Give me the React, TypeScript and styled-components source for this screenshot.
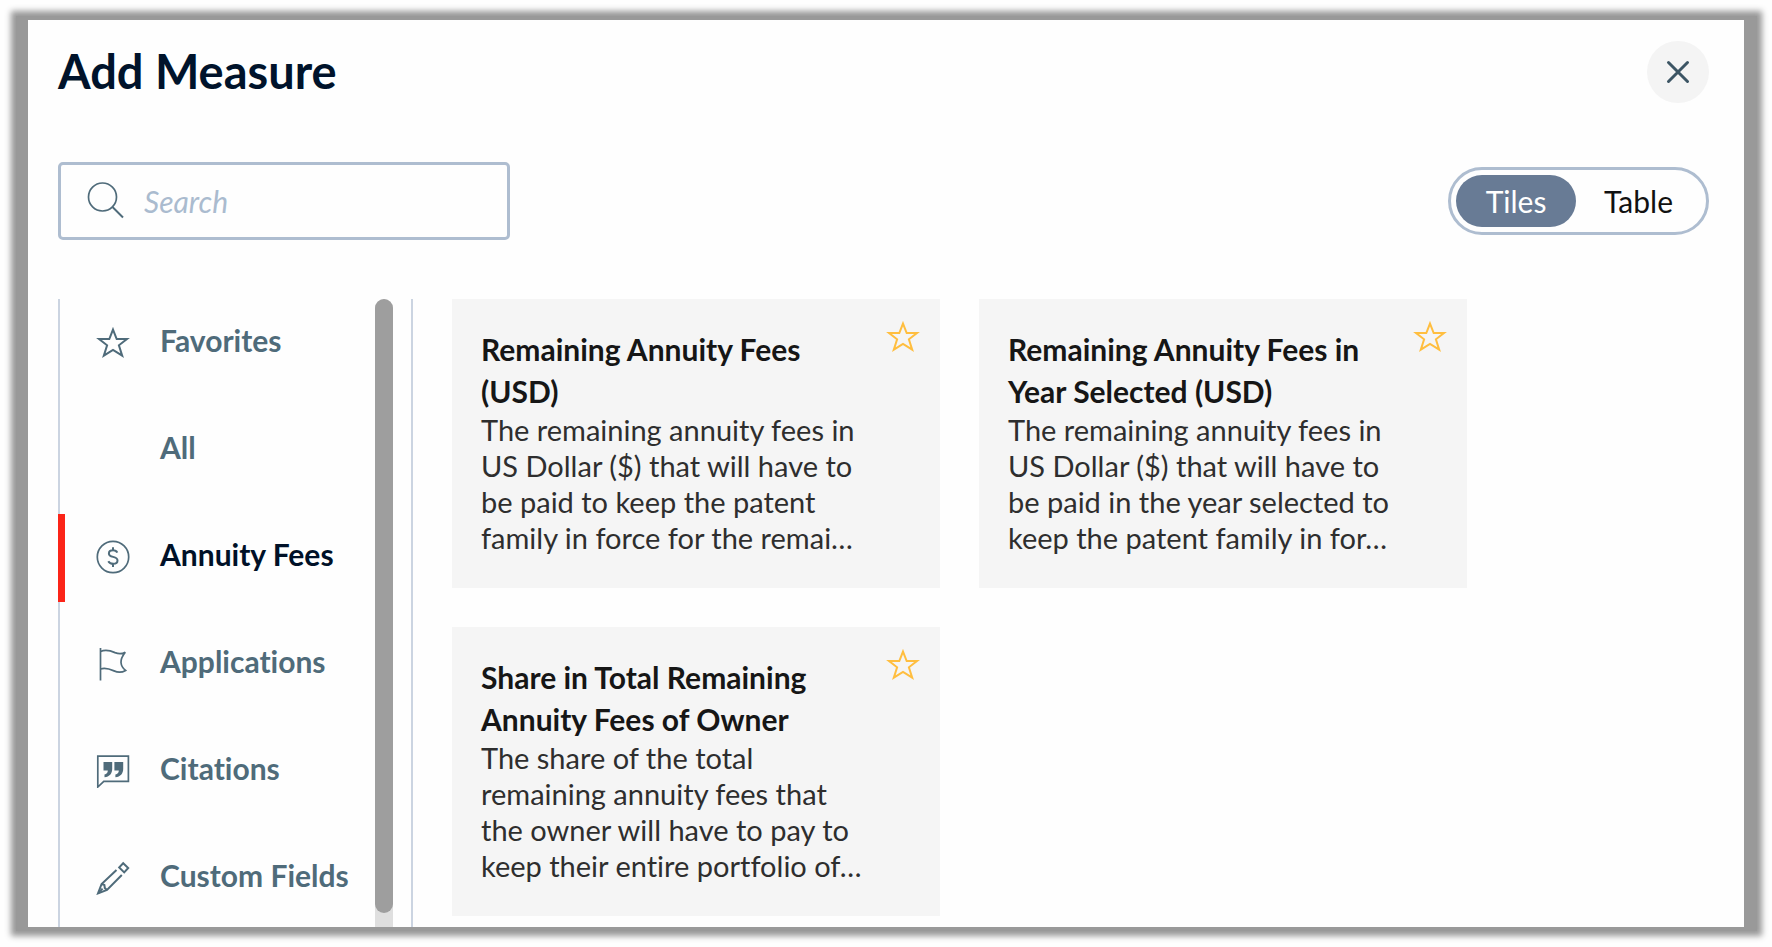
import React, { useState } from 'react';
import styled, { createGlobalStyle } from 'styled-components';

const GlobalStyle = createGlobalStyle`
  *, *::before, *::after { box-sizing: border-box; }
  body {
    margin: 0;
    background: #fefefe;
    font-family: Lato, "Liberation Sans", sans-serif;
    font-size: 29px;
    font-variant-ligatures: none;
    color: #222;
  }
  button, input { font: inherit; color: inherit; }
`;

const Page = styled.div`
  display: flex;
  min-height: 100vh;
  padding: 16px 15px 16px 16px;
`;

const Frame = styled.div`
  display: flex;
  flex: 1;
  padding: 4px 13px 4px 12px;
  background: #999;
  box-shadow: 0 0 6px 5px #999;
`;

const Dialog = styled.section`
  display: flex;
  flex-direction: column;
  flex: 1;
  min-width: 0;
  padding: 21px 35px 0 30px;
  background: #fefefe;
`;

const Header = styled.header`
  display: flex;
  justify-content: space-between;
  align-items: flex-start;
`;

const Title = styled.h1`
  margin: 0;
  font-size: 47px;
  line-height: 60px;
  font-weight: 700;
  color: #00132b;
`;

const CloseButton = styled.button`
  display: flex;
  align-items: center;
  justify-content: center;
  width: 62px;
  height: 62px;
  padding: 0;
  border: 0;
  border-radius: 50%;
  background: #f4f4f4;
  color: #3c5564;
  cursor: pointer;
`;

const Toolbar = styled.div`
  display: flex;
  justify-content: space-between;
  align-items: center;
  margin-top: 59px;
`;

const SearchBox = styled.label`
  display: flex;
  align-items: center;
  gap: 20px;
  width: 452px;
  height: 78px;
  padding: 0 25px;
  border: 3px solid #aebdd0;
  border-radius: 5px;
  color: #4f6b7a;
`;

const SearchInput = styled.input`
  flex: 1;
  min-width: 0;
  padding: 0;
  border: 0;
  outline: 0;
  background: transparent;
  font-size: 30px;
  &::placeholder {
    color: #aabbcf;
    font-style: italic;
    opacity: 1;
  }
`;

const Toggle = styled.div`
  display: flex;
  padding: 5px;
  border: 3px solid #aebdd0;
  border-radius: 34px;
`;

const ToggleButton = styled.button<{ $active: boolean }>`
  min-width: 120px;
  height: 52px;
  padding: 0 28px;
  border: 0;
  border-radius: 26px;
  font-size: 30px;
  line-height: 36px;
  background: ${(p) => (p.$active ? '#687b95' : 'transparent')};
  color: ${(p) => (p.$active ? '#fff' : '#111')};
  cursor: pointer;
`;

const Content = styled.div`
  display: flex;
  flex: 1;
  gap: 39px;
  margin-top: 59px;
`;

const Sidebar = styled.nav`
  display: flex;
  flex: none;
  width: 355px;
  padding-right: 18px;
  border-right: 2px solid #cbd4e1;
`;

const CategoryList = styled.ul`
  display: flex;
  flex: 1;
  flex-direction: column;
  gap: 19px;
  margin: 0;
  padding: 1px 0 0;
  list-style: none;
  box-shadow: inset 2px 0 #cbd4e1;
`;

const CategoryButton = styled.button<{ $active: boolean }>`
  display: flex;
  align-items: center;
  gap: 30px;
  width: 100%;
  height: 88px;
  padding: 0 0 2px 31px;
  border: 0;
  border-left: 7px solid ${(p) => (p.$active ? '#fb2418' : 'transparent')};
  background: transparent;
  font-size: 30px;
  font-weight: 700;
  text-align: left;
  white-space: nowrap;
  color: ${(p) => (p.$active ? '#001128' : '#4f6b7a')};
  cursor: pointer;
`;

const IconSlot = styled.span`
  display: flex;
  width: 34px;
  height: 34px;
  flex: none;
  color: #4f6b7a;
`;

const CategoryLabel = styled.span`
  padding-bottom: 6px;
  line-height: 36px;
`;

const ScrollTrack = styled.div`
  width: 18px;
  background: #dfdfdf;
  border-radius: 9px 9px 0 0;
`;

const ScrollThumb = styled.div`
  width: 18px;
  height: calc(100% - 14px);
  border-radius: 9px;
  background: #9e9e9e;
`;

const Tiles = styled.div`
  display: grid;
  grid-template-columns: repeat(auto-fill, 488px);
  gap: 39px;
  flex: 1;
  align-content: start;
  padding-bottom: 11px;
`;

const Tile = styled.article`
  display: flex;
  justify-content: space-between;
  align-items: flex-start;
  padding: 21px 20px 32px 29px;
  background: #f5f5f5;
`;

const TileText = styled.div`
  width: 386px;
  padding-top: 8px;
`;

const TileTitle = styled.h2`
  margin: 0;
  font-size: 30px;
  line-height: 42px;
  font-weight: 700;
  color: #161616;
`;

const TileDescription = styled.p`
  margin: 0;
  line-height: 36px;
  color: #2e2e2e;
`;

const StarButton = styled.button`
  display: flex;
  padding: 0;
  border: 0;
  background: transparent;
  color: #ffbe3f;
  cursor: pointer;
`;

const Svg = ({ size = 34, width = 1.7, children }: { size?: number; width?: number; children: React.ReactNode }) => (
  <svg width={size} height={size} viewBox={`0 0 ${size} ${size}`} fill="none" stroke="currentColor" strokeWidth={width} aria-hidden="true">
    {children}
  </svg>
);

const StarIcon = () => (
  <Svg width={2}>
    <path d="M17 3.6 L20.7 13 H31 L22.9 19.3 L26.2 29.6 L17 23.9 L7.8 29.6 L11.1 19.3 L3 13 H13.3 Z" />
  </Svg>
);

const DollarIcon = () => (
  <Svg>
    <circle cx="17" cy="17" r="15.7" />
    <path
      strokeWidth="2"
      d="M21.3 12.6 C20.5 11 19 10.3 17.1 10.3 C14.6 10.3 12.9 11.6 12.9 13.5 C12.9 15.6 14.6 16.3 17.1 16.9 C19.8 17.5 21.5 18.3 21.5 20.5 C21.5 22.5 19.7 23.8 17.2 23.8 C15 23.8 13.2 22.9 12.3 21.2 M17 7.2 V10.5 M17 23.6 V27"
    />
  </Svg>
);

const FlagIcon = () => (
  <Svg>
    <path d="M4.5 1 V33.5" />
    <path d="M4.5 4.6 C10 1.8 15 3.8 19 5.6 C23 7.2 26.5 6.8 29.3 5.2 C26.3 9 24.7 12 25 15.5 C25.3 19 27 21.5 29.6 23.4 C25.5 25.9 21.8 25.6 18 23.9 C13.8 22 9.5 20.3 4.5 22" />
  </Svg>
);

const QuoteIcon = () => (
  <Svg>
    <path d="M1.8 2.2 H32.4 V27.4 H7.8 L1.8 33 Z" />
    <path
      fill="currentColor"
      stroke="none"
      d="M7.5 8 H16.2 V15 C16.2 19.5 13.5 22.8 8.5 23.2 V20.5 C10.8 20 11.8 18.5 11.8 16.5 H7.5 Z M18.4 8 H27.2 V15 C27.2 19.5 24.5 22.8 19.4 23.2 V20.5 C21.8 20 22.8 18.5 22.8 16.5 H18.4 Z"
    />
  </Svg>
);

const PencilIcon = () => (
  <Svg width={2}>
    <path d="M20.5 9 L5.6 23 L2 32.4 L11 29 L25.8 14" />
    <path d="M5.6 23 L8.4 24 L8.8 27 L11 29" />
    <path d="M2.5 31.8 L6.6 27.6" />
    <path d="M23.2 6.4 L27.2 2.2 L32.2 7 L28.2 11.4 Z" />
  </Svg>
);

const SearchIcon = () => (
  <Svg size={38}>
    <circle cx="16.5" cy="15" r="14" />
    <path d="M26.5 25 L37 35.5" strokeWidth="2" />
  </Svg>
);

const CloseIcon = () => (
  <Svg size={24} width={3}>
    <path d="M2.5 2.5 L21.5 21.5 M21.5 2.5 L2.5 21.5" strokeLinecap="round" />
  </Svg>
);

const categories: { name: string; icon?: React.ReactNode }[] = [
  { name: 'Favorites', icon: <StarIcon /> },
  { name: 'All' },
  { name: 'Annuity Fees', icon: <DollarIcon /> },
  { name: 'Applications', icon: <FlagIcon /> },
  { name: 'Citations', icon: <QuoteIcon /> },
  { name: 'Custom Fields', icon: <PencilIcon /> },
];

const measures = [
  {
    title: 'Remaining Annuity Fees (USD)',
    text: 'The remaining annuity fees in US Dollar ($) that will have to be paid to keep the patent family in force for the remai…',
  },
  {
    title: 'Remaining Annuity Fees in Year Selected (USD)',
    text: 'The remaining annuity fees in US Dollar ($) that will have to be paid in the year selected to keep the patent family in for…',
  },
  {
    title: 'Share in Total Remaining Annuity Fees of Owner',
    text: 'The share of the total remaining annuity fees that the owner will have to pay to keep their entire portfolio of…',
  },
];

export default function App() {
  const [view, setView] = useState('Tiles');
  const [category, setCategory] = useState('Annuity Fees');

  return (
    <>
      <GlobalStyle />
      <Page>
        <Frame>
          <Dialog role="dialog" aria-labelledby="dialog-title">
            <Header>
              <Title id="dialog-title">Add Measure</Title>
              <CloseButton type="button" aria-label="Close">
                <CloseIcon />
              </CloseButton>
            </Header>
            <Toolbar>
              <SearchBox>
                <SearchIcon />
                <SearchInput type="text" placeholder="Search" aria-label="Search" />
              </SearchBox>
              <Toggle role="group" aria-label="View">
                {['Tiles', 'Table'].map((name) => (
                  <ToggleButton key={name} type="button" $active={view === name} aria-pressed={view === name} onClick={() => setView(name)}>
                    {name}
                  </ToggleButton>
                ))}
              </Toggle>
            </Toolbar>
            <Content>
              <Sidebar aria-label="Categories">
                <CategoryList>
                  {categories.map((c) => (
                    <li key={c.name}>
                      <CategoryButton type="button" $active={category === c.name} onClick={() => setCategory(c.name)}>
                        <IconSlot>{c.icon}</IconSlot>
                        <CategoryLabel>{c.name}</CategoryLabel>
                      </CategoryButton>
                    </li>
                  ))}
                </CategoryList>
                <ScrollTrack>
                  <ScrollThumb />
                </ScrollTrack>
              </Sidebar>
              <Tiles>
                {measures.map((m) => (
                  <Tile key={m.title}>
                    <TileText>
                      <TileTitle>{m.title}</TileTitle>
                      <TileDescription>{m.text}</TileDescription>
                    </TileText>
                    <StarButton type="button" aria-label={`Add ${m.title} to favorites`}>
                      <StarIcon />
                    </StarButton>
                  </Tile>
                ))}
              </Tiles>
            </Content>
          </Dialog>
        </Frame>
      </Page>
    </>
  );
}
